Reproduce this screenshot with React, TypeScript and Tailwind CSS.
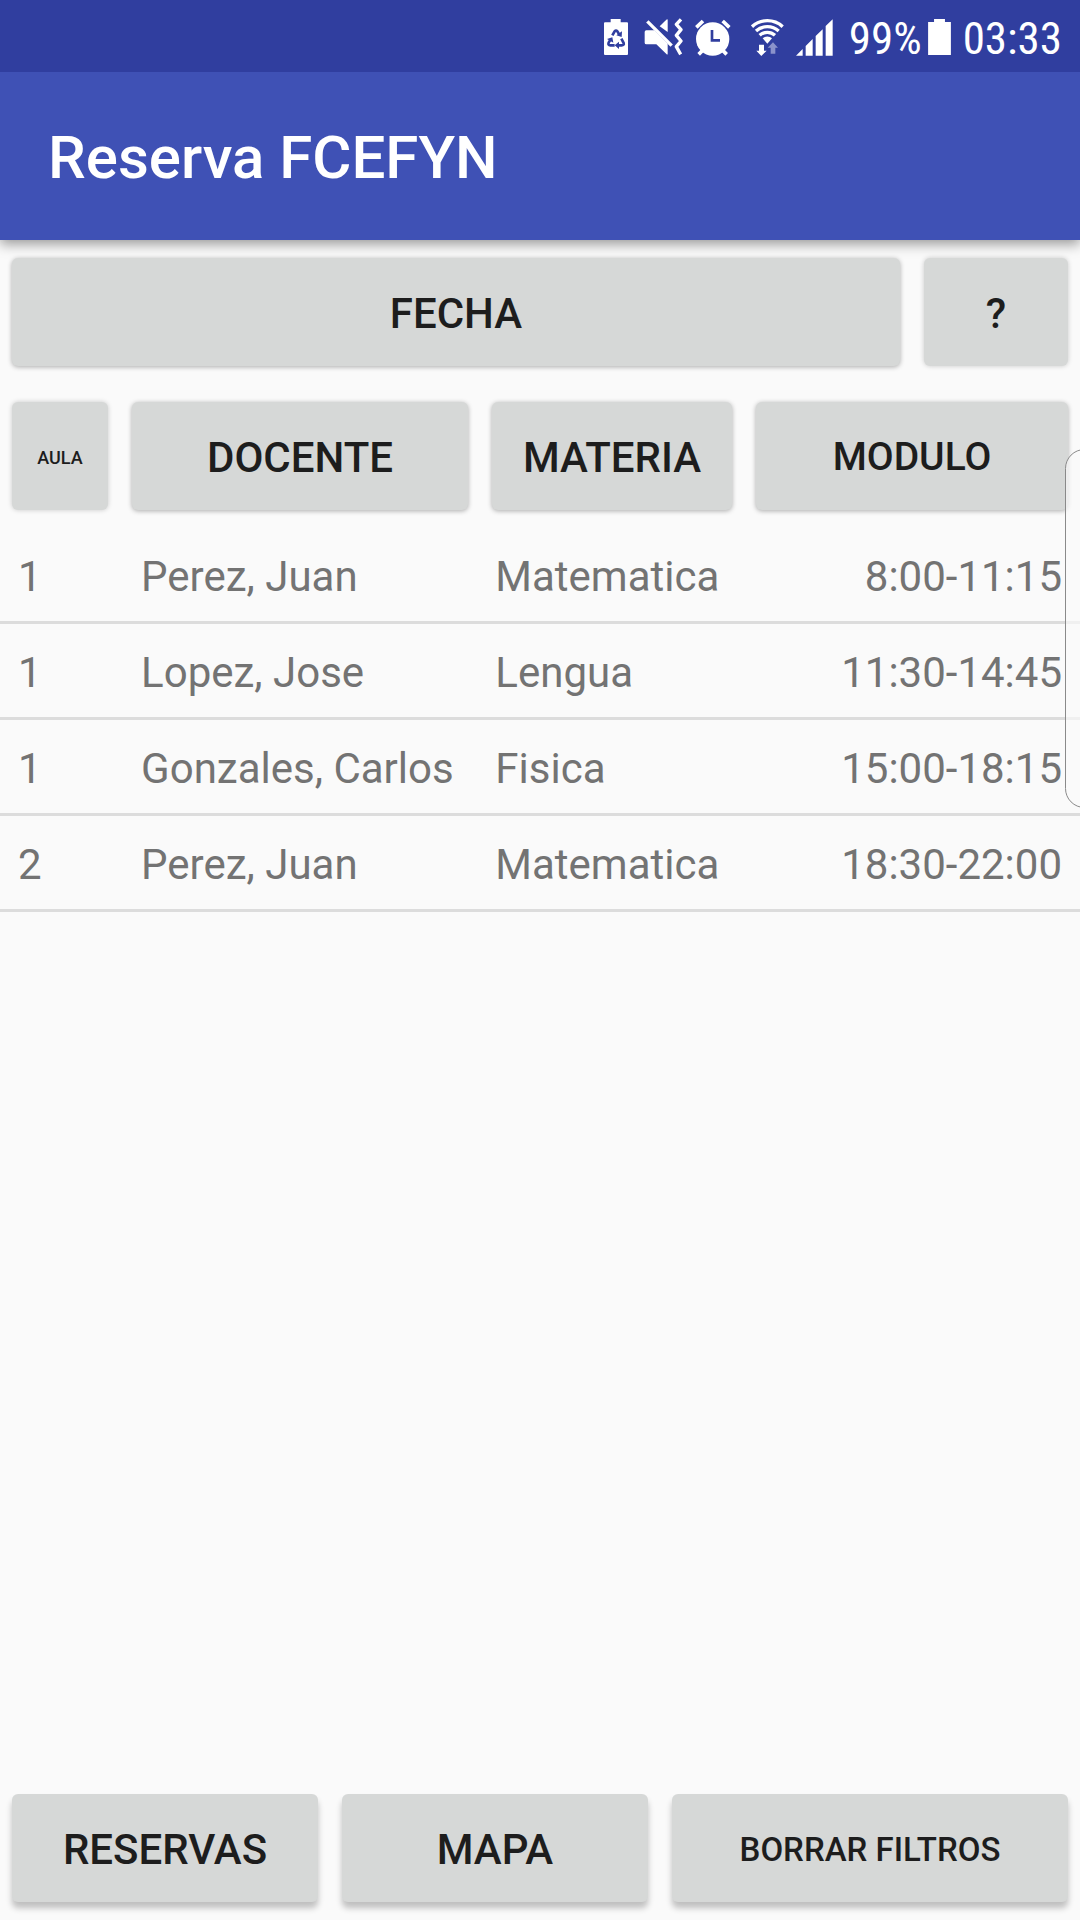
import type { ReactNode } from "react";

const bookings = [
  { aula: "1", docente: "Perez, Juan", materia: "Matematica", modulo: "8:00-11:15" },
  { aula: "1", docente: "Lopez, Jose", materia: "Lengua", modulo: "11:30-14:45" },
  { aula: "1", docente: "Gonzales, Carlos", materia: "Fisica", modulo: "15:00-18:15" },
  { aula: "2", docente: "Perez, Juan", materia: "Matematica", modulo: "18:30-22:00" },
];

function Button({ children, className = "text-[42px]" }: { children: ReactNode; className?: string }) {
  return (
    <button
      type="button"
      className={`h-27 rounded-md bg-[#d6d8d7] pt-[3px] text-center font-medium whitespace-nowrap text-[#1d1d1d] ${className}`}
    >
      {children}
    </button>
  );
}

function BatterySaverIcon() {
  return (
    <svg viewBox="42 57 72 108" className="h-9 w-6" aria-hidden="true">
      <path fill="#fff" d="M62 57h30v10h19q3 0 3 3v92q0 3-3 3H45q-3 0-3-3V70q0-3 3-3h17z" />
      <g fill="none" stroke="#303e9f" strokeWidth="8">
        <path d="M67 106l7-12q4-5 8 0l6 10" />
        <path d="M94 116l7 13q2 7-6 7H83" />
        <path d="M74 136H61q-8 0-5-8l6-10" />
      </g>
      <path fill="#303e9f" d="M79 106l16 5 1-17zM87 125v22l-13-11zM51 117l16-5 3 16z" />
    </svg>
  );
}

function MuteVibrateIcon() {
  return (
    <svg viewBox="160 55 117 114" className="h-[38px] w-[39px]" aria-hidden="true">
      <path fill="#fff" d="M162 97q0-5 5-5h24l40 40v30q0 4-3 2l-31-30h-30q-5 0-5-5z" />
      <path fill="#fff" d="M231 60v37l-24-17 20-20q4-2 4 0z" />
      <path stroke="#303e9f" strokeWidth="6" d="M180 62l66 66" />
      <path stroke="#fff" strokeWidth="10" d="M170 65l73 73" />
      <path
        fill="none"
        stroke="#fff"
        strokeWidth="10"
        strokeLinejoin="round"
        d="M271 59l-14 15 14 16-14 17 14 17-14 17 13 23"
      />
    </svg>
  );
}

function AlarmIcon() {
  return (
    <svg viewBox="313 55 108 111" className="h-[37px] w-9" aria-hidden="true">
      <circle cx="366" cy="115" r="50" fill="#fff" />
      <path stroke="#fff" strokeWidth="11" d="M317 80l20-19M416 80l-20-19M324 161l14-14M408 161l-14-14" />
      <path fill="none" stroke="#303e9f" strokeWidth="8" d="M364 88v31h24" />
    </svg>
  );
}

function WifiIcon() {
  return (
    <svg viewBox="481 52 99 114" className="h-[38px] w-[33px]" aria-hidden="true">
      <g fill="none" stroke="#fff" strokeWidth="10">
        <path d="M484 78a68 68 0 0 1 92 0" />
        <path d="M496 91a51 51 0 0 1 68 0" />
        <path d="M507 104a34 34 0 0 1 46 0" />
      </g>
      <path fill="#fff" d="M516 113a20 20 0 0 1 28 0l-14 16z" />
      <path fill="#fff" d="M505 132h15v18h8l-16 16-15-16h8z" />
      <path fill="#8a92cb" d="M540 159h14v-18h8l-15-16-16 16h9z" />
    </svg>
  );
}

function SignalIcon() {
  return (
    <svg viewBox="613 55 111 111" className="size-[37px]" aria-hidden="true">
      <path fill="#fff" d="M613 165l20-20v20zM642 165v-29l21-21v50zM672 165v-59l21-20v79zM702 165V76l21-20v109z" />
    </svg>
  );
}

function BatteryIcon() {
  return (
    <svg viewBox="291 57 69 109" className="h-9 w-[23px]" aria-hidden="true">
      <path fill="#fff" d="M309 57h33v9h18v100h-69V66h18z" />
    </svg>
  );
}

export default function App() {
  return (
    <div className="relative flex min-h-screen flex-col overflow-hidden bg-[#fafafa] font-['Roboto',sans-serif]">
      <div className="relative z-10 flex h-18 items-center justify-end bg-[#303e9f] pt-0.5 pr-[18px] font-['Roboto_Condensed','Roboto',sans-serif] text-[45px] leading-none text-white">
        <BatterySaverIcon />
        <div className="ml-4 flex"><MuteVibrateIcon /></div>
        <div className="ml-3 flex"><AlarmIcon /></div>
        <div className="ml-5 flex"><WifiIcon /></div>
        <div className="ml-3 flex"><SignalIcon /></div>
        <span className="ml-4 pt-0.5">99%</span>
        <div className="ml-1.5 flex"><BatteryIcon /></div>
        <span className="ml-3 pt-0.5">03:33</span>
      </div>

      <header className="flex h-42 items-center bg-[#3f51b5] px-12 pt-1 shadow-[0_4px_12px_rgba(0,0,0,0.4)]">
        <h1 className="text-[60px] font-medium text-white">Reserva FCEFYN</h1>
      </header>

      <main className="flex-1">
        <div className="flex flex-col gap-9 px-3 py-[18px]">
          <div className="flex gap-6">
            <Button className="flex-1 text-[42px] shadow-[0_1px_5px_rgba(0,0,0,0.32)]">FECHA</Button>
            <Button className="w-36 text-[42px] shadow-[0_0_5px_rgba(0,0,0,0.2)]">?</Button>
          </div>
          <div className="grid grid-cols-[96fr_336fr_240fr_312fr] gap-6">
            <Button className="text-[18px] shadow-[0_0_5px_rgba(0,0,0,0.2)]">AULA</Button>
            <Button className="text-[42px] shadow-[0_1px_5px_rgba(0,0,0,0.32)]">DOCENTE</Button>
            <Button className="text-[42px] shadow-[0_1px_5px_rgba(0,0,0,0.32)]">MATERIA</Button>
            <Button className="text-[39px] shadow-[0_1px_5px_rgba(0,0,0,0.32)]">MODULO</Button>
          </div>
        </div>

        <table className="w-full table-fixed border-separate border-spacing-0 text-[42px] leading-[50px] text-[#737373]">
          <colgroup>
            <col className="w-[11.4%]" />
            <col className="w-[32.8%]" />
            <col className="w-[29%]" />
            <col />
          </colgroup>
          <tbody>
            {bookings.map((b) => (
              <tr key={b.modulo} className="h-24 whitespace-nowrap *:border-b-3 *:border-[#dcdcdc] *:pt-1">
                <td className="pl-[18px]">{b.aula}</td>
                <td className="pl-[18px]">{b.docente}</td>
                <td className="pl-[18px]">{b.materia}</td>
                <td className="pr-[18px] text-right">{b.modulo}</td>
              </tr>
            ))}
          </tbody>
        </table>
      </main>

      <footer className="grid grid-cols-[306fr_306fr_396fr] gap-6 px-3 pb-[18px]">
        <Button className="text-[42px] shadow-[0_6px_6px_rgba(0,0,0,0.24)]">RESERVAS</Button>
        <Button className="text-[42px] shadow-[0_6px_6px_rgba(0,0,0,0.24)]">MAPA</Button>
        <Button className="text-[33px] shadow-[0_6px_6px_rgba(0,0,0,0.24)]">BORRAR FILTROS</Button>
      </footer>

      <div className="absolute top-[449px] -right-6 h-[359px] w-[39px] rounded-[22px] border border-[#8a8a8a] bg-[#fafafa]/65" />
    </div>
  );
}
